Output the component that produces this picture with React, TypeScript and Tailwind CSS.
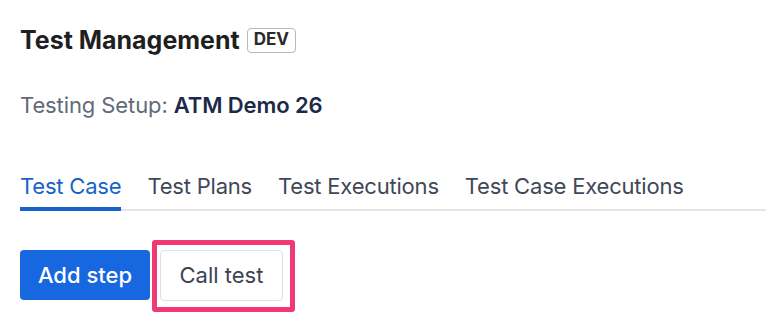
export default function App() {
  const tabs = ['Test Case', 'Test Plans', 'Test Executions', 'Test Case Executions'];
  return (
    <div className="min-h-screen bg-white pl-5 font-['Inter',sans-serif]">
      <div className="flex h-[80px] items-center gap-[7px]">
        <h1 className="text-[25px] font-bold leading-none text-[#1f1f1f]">
          Test Management
        </h1>
        <span className="flex h-[25px] items-center rounded-[4px] border border-[#b8b8b8] px-[6px] text-[17px] font-bold text-[#2a2a2a]">
          DEV
        </span>
      </div>
      <div className="flex h-[50px] items-center text-[22px] tracking-[-0.1px]">
        <span className="text-[#626a7a]">Testing Setup:&nbsp;</span>
        <span className="font-semibold text-[#1c2a4a]">ATM Demo 26</span>
      </div>
      <div className="mt-[40px] flex gap-[26px] border-b-[2px] border-[#e3e5e8] text-[22px] leading-[33px] tracking-[-0.2px]">
        {tabs.map((t, i) => (
          <div
            key={t}
            className={
              i === 0
                ? '-mb-[2px] border-b-[4px] border-[#1664c9] pb-[4px] text-[#1664c9]'
                : 'pb-[6px] text-[#404858]'
            }
          >
            {t}
          </div>
        ))}
      </div>
      <div className="mt-[29px] flex items-start">
        <button className="mt-[10px] h-[50px] w-[130px] rounded-[4px] bg-[#1767e0] text-[22px] font-medium text-white">
          Add step
        </button>
        <div className="ml-[2px] rounded-[3px] border-[5px] border-[#f03a73] pb-[6px] pl-[3px] pr-[7px] pt-[5px]">
          <button className="h-[51px] w-[123px] rounded-[4px] border border-[#dcdfe3] bg-white text-[22px] text-[#3c4354]">
            Call test
          </button>
        </div>
      </div>
    </div>
  );
}
